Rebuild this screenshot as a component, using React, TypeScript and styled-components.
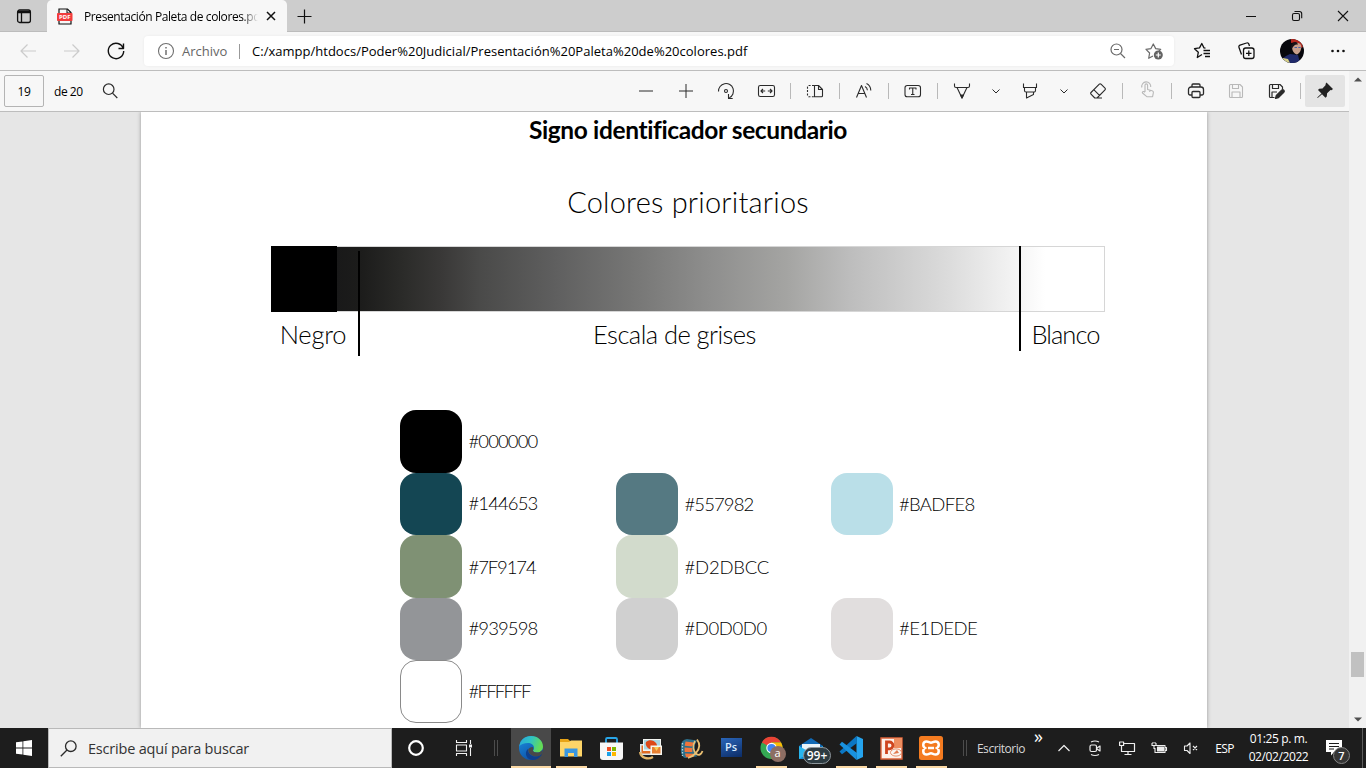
import React from 'react';
import styled, { createGlobalStyle } from 'styled-components';

const ui = `"Open Sans", "Noto Sans", sans-serif`;
const doc = `Lato, "Open Sans", sans-serif`;

const GlobalStyle = createGlobalStyle`
  * { box-sizing: border-box; }
  body { margin: 0; overflow: hidden; background: #e6e6e6; }
  svg { display: block; flex: none; overflow: visible; }
`;

const Screen = styled.div`
  width: 1366px;
  height: 768px;
  display: flex;
  flex-direction: column;
  font-family: ${ui};
  color: #000;
`;

const Text = styled.span<{ $size: number; $ls?: number; $color?: string }>`
  font-size: ${p => p.$size}px;
  letter-spacing: ${p => p.$ls ?? 0}px;
  color: ${p => p.$color ?? '#000'};
  white-space: nowrap;
`;

/* ---------- tab strip ---------- */
const TabStrip = styled.header`
  height: 32px;
  flex: none;
  display: flex;
  background: #cdcdcd;
  box-shadow: inset 0 -1px 0 #bcbcbc;
`;
const TabMenu = styled.div`
  width: 47px;
  display: flex;
  align-items: center;
  padding-left: 16px;
`;
const Tab = styled.div`
  width: 240px;
  height: 32px;
  background: #f7f7f7;
  border-radius: 5px 5px 0 0;
  display: flex;
  align-items: center;
  padding-left: 10px;
`;
const TabTitle = styled(Text)`
  width: 175px;
  margin: 0 7px 0 11px;
  overflow: hidden;
  mask-image: linear-gradient(90deg, #000 158px, transparent 174px);
`;
const NewTab = styled.div`
  flex: 1;
  display: flex;
  align-items: center;
  padding-left: 10px;
`;
const WindowButton = styled.div`
  width: 46px;
  display: flex;
  align-items: center;
  justify-content: center;
`;

/* ---------- address row ---------- */
const AddressRow = styled.nav`
  height: 39px;
  flex: none;
  display: flex;
  background: #f7f7f7;
  border-bottom: 1px solid #bdbdbd;
`;
const NavButton = styled.div<{ $w: number }>`
  width: ${p => p.$w}px;
  display: flex;
  align-items: center;
  justify-content: center;
`;
const AddressBar = styled.div`
  width: 1030px;
  height: 30px;
  margin: 4px 6px 0 0;
  padding-left: 12px;
  background: #fff;
  border-radius: 4px;
  box-shadow: 0 0 3px rgba(0, 0, 0, 0.06);
  display: flex;
  align-items: center;
`;
const SchemeLabel = styled(Text)`
  width: 57px;
  margin-left: 6px;
`;
const Rule = styled.span`
  width: 1px;
  height: 15px;
  margin: 0 12px 0 0;
  background: #999;
`;
const Url = styled(Text)`
  flex: 1;
`;

/* ---------- pdf toolbar ---------- */
const Body = styled.div`
  flex: 1;
  display: flex;
  min-height: 0;
`;
const PdfViewer = styled.div`
  width: 1349px;
  display: flex;
  flex-direction: column;
`;
const PdfToolbar = styled.div`
  height: 41px;
  flex: none;
  display: flex;
  align-items: center;
  background: #f7f7f7;
  border-bottom: 1px solid #bdbdbd;
  padding-left: 4px;
`;
const PageInput = styled.div`
  width: 40px;
  height: 32px;
  border: 1px solid #b4b4b4;
  border-radius: 2px;
  display: flex;
  align-items: center;
  justify-content: center;
`;
const PageTotal = styled(Text)`
  width: 47px;
  margin-left: 10px;
`;
const Tools = styled.div`
  display: flex;
  align-items: center;
  margin-left: auto;
  margin-right: 4px;
`;
const Tool = styled.div<{ $w?: number }>`
  width: ${p => p.$w ?? 42}px;
  height: 32px;
  display: flex;
  align-items: center;
  justify-content: center;
`;
const ToolRule = styled.span`
  width: 1px;
  height: 16px;
  margin: 0 3px;
  background: #b9b9b9;
`;
const PinButton = styled(Tool)`
  margin-left: 1px;
  background: #e4e4e4;
  border-radius: 2px;
`;

/* ---------- document ---------- */
const Canvas = styled.main`
  flex: 1;
  min-height: 0;
  overflow: hidden;
  background: #e6e6e6;
  padding-left: 141px;
`;
const Page = styled.article`
  width: 1066px;
  height: 616px;
  background: #fff;
  padding-left: 130px;
  font-family: ${doc};
  box-shadow: 0 0 4px rgba(0, 0, 0, 0.35);
`;
const Content = styled.div`
  width: 834px;
`;
const Heading = styled.h1`
  margin: 0;
  height: 34px;
  line-height: 35px;
  font-size: 24.5px;
  font-weight: 700;
  letter-spacing: -0.38px;
  text-align: center;
  white-space: nowrap;
`;
const SubHeading = styled.h2`
  margin: 37px 0 27px;
  height: 36px;
  line-height: 38px;
  font-size: 29px;
  font-weight: 300;
  letter-spacing: 0.2px;
  text-align: center;
  color: #000;
`;
const Scale = styled.div`
  position: relative;
  height: 66px;
  display: flex;
`;
const BlackBlock = styled.div`
  width: 66px;
  background: #000;
`;
const Ramp = styled.div`
  flex: 1;
  border: 1px solid #d6d6d6;
  border-left: 0;
  background: linear-gradient(
    90deg,
    #191919 0, #1c1c1b 24px, #2b2b29 66px, #393837 104px, #4a4a49 143px, #5f5f5f 218px,
    #767675 296px, #8e8e8d 372px, #a4a4a2 449px, #bdbdbd 513px, #dcdcdc 613px,
    #f5f5f5 682px, #fff 708px
  );
`;
const Divider = styled.span<{ $x: number; $y: number }>`
  position: absolute;
  left: ${p => p.$x}px;
  top: ${p => p.$y}px;
  width: 2px;
  height: 105px;
  background: #000;
`;
const ScaleLabels = styled.div`
  display: grid;
  grid-template-columns: 84px 639px 32px 79px;
  height: 44px;
  line-height: 45px;
  font-size: 25.5px;
  font-weight: 300;
  text-align: center;
  color: #000;
`;
const ScaleLabel = styled.span<{ $ls: number; $col: number }>`
  grid-column: ${p => p.$col};
  letter-spacing: ${p => p.$ls}px;
  white-space: nowrap;
`;
const Palette = styled.div`
  display: grid;
  grid-template-columns: 216px 214.5px 200px;
  grid-auto-rows: 62.6px;
  margin: 54px 0 0 129px;
`;
const PaletteItem = styled.div<{ $col: number; $row: number }>`
  grid-column: ${p => p.$col};
  grid-row: ${p => p.$row};
  display: flex;
  align-items: center;
`;
const Swatch = styled.div<{ $color: string; $outlined?: boolean }>`
  width: 62px;
  height: 62.6px;
  margin-right: 6.5px;
  border-radius: 16px;
  background: ${p => p.$color};
  border: ${p => (p.$outlined ? '1px solid #8a8a8a' : '0')};
`;
const Hex = styled.span<{ $ls: number; $lift: number }>`
  font-size: 18.5px;
  font-weight: 300;
  letter-spacing: ${p => p.$ls}px;
  margin-bottom: ${p => p.$lift * 2}px;
  color: #000;
`;

/* ---------- scrollbar ---------- */
const Scrollbar = styled.div`
  width: 17px;
  background: #f1f1f1;
  display: flex;
  flex-direction: column;
  align-items: center;
`;
const ScrollArrow = styled.div`
  height: 17px;
  display: flex;
  align-items: center;
`;
const ScrollThumb = styled.div`
  width: 13px;
  height: 25px;
  margin: 564px 0 34px;
  background: #c1c1c1;
`;

/* ---------- taskbar ---------- */
const Taskbar = styled.footer`
  height: 40px;
  flex: none;
  display: flex;
  background: #1d1d1d;
`;
const Cell = styled.div<{ $w: number }>`
  width: ${p => p.$w}px;
  height: 40px;
  flex: none;
  display: flex;
  align-items: center;
  justify-content: center;
`;
const SearchBox = styled.div`
  width: 344px;
  height: 40px;
  display: flex;
  align-items: center;
  padding-left: 11px;
  gap: 11px;
  background: #f1f1f1;
  border: 1px solid #b9b9b9;
`;
const Grip = styled.div<{ $ml: number; $mr: number }>`
  width: 4px;
  height: 16px;
  margin: 12px ${p => p.$mr}px 0 ${p => p.$ml}px;
  border: solid #4c4c4c;
  border-width: 0 1px;
`;
const AppTile = styled.div<{ $active?: boolean }>`
  width: 40px;
  height: 40px;
  padding-top: 2px;
  display: flex;
  flex-direction: column;
  align-items: center;
  background: ${p => (p.$active ? '#494949' : 'transparent')};
`;
const AppIcon = styled.div`
  position: relative;
  flex: 1;
  display: flex;
  align-items: center;
`;
const Underline = styled.span<{ $w: number }>`
  width: ${p => p.$w}px;
  height: 2px;
  background: #fbd9a5;
`;
const ChromeBadge = styled.span`
  position: absolute;
  left: 10px;
  top: 16px;
  width: 16px;
  height: 16px;
  border-radius: 50%;
  background: #8d6e63;
  color: #fff;
  font-size: 11px;
  line-height: 14px;
  text-align: center;
`;
const MailBadge = styled.span`
  position: absolute;
  left: 4px;
  top: 17px;
  width: 28px;
  height: 17px;
  border-radius: 9px;
  border: 1px solid #8d969c;
  background: #2d3b42;
  color: #fff;
  font-size: 12px;
  font-weight: 600;
  line-height: 15px;
  text-align: center;
`;
const PsTile = styled.span`
  width: 21px;
  height: 19px;
  margin-bottom: 3px;
  background: linear-gradient(160deg, #2a66ba, #0c2c66);
  color: #d9ecff;
  font-size: 11px;
  font-weight: 600;
  line-height: 18px;
  text-align: center;
`;
const More = styled(Text)`
  width: 14px;
  height: 20px;
  line-height: 17px;
  margin-left: 8px;
`;
const Clock = styled.div`
  width: 71px;
  display: flex;
  flex-direction: column;
  align-items: center;
  padding-top: 2px;
  line-height: 18px;
`;
const Notice = styled.div`
  position: relative;
  margin: 11px 0 0 12px;
  width: 36px;
`;
const NoticeBadge = styled.span`
  position: absolute;
  left: 7px;
  top: 8px;
  width: 17px;
  height: 17px;
  border-radius: 50%;
  border: 1px solid #858585;
  background: #353535;
  color: #fff;
  font-size: 11px;
  font-weight: 600;
  line-height: 15px;
  text-align: center;
`;
const ShowDesktop = styled.span`
  width: 1px;
  height: 40px;
  background: #5c5c5c;
`;

type IconProps = { w?: number; h?: number; stroke?: string; sw?: number; children: React.ReactNode };
const Icon = ({ w = 20, h = 20, stroke = '#2b2b2b', sw = 1.1, children }: IconProps) => (
  <svg width={w} height={h} viewBox={`0 0 ${w} ${h}`} fill="none" stroke={stroke} strokeWidth={sw} strokeLinejoin="round">
    {children}
  </svg>
);

const ChevronDown = () => <Icon sw={1}><path d="M6.500 8.500L10 12l3.500-3.500" /></Icon>;

const colors: { hex: string; col: number; row: number; ls: number; lift: number; outlined?: boolean }[] = [
  { hex: '#000000', col: 1, row: 1, ls: -0.9, lift: 0 },
  { hex: '#144653', col: 1, row: 2, ls: -0.9, lift: 0.5 },
  { hex: '#7F9174', col: 1, row: 3, ls: -1.1, lift: -1 },
  { hex: '#939598', col: 1, row: 4, ls: -0.9, lift: 1 },
  { hex: '#FFFFFF', col: 1, row: 5, ls: -1.75, lift: 1, outlined: true },
  { hex: '#557982', col: 2, row: 2, ls: -0.9, lift: 0 },
  { hex: '#D2DBCC', col: 2, row: 3, ls: -0.2, lift: -1 },
  { hex: '#D0D0D0', col: 2, row: 4, ls: -0.4, lift: 1 },
  { hex: '#BADFE8', col: 3, row: 2, ls: -0.7, lift: 0 },
  { hex: '#E1DEDE', col: 3, row: 4, ls: -0.5, lift: 1 },
];

export default function App() {
  return (
    <Screen>
      <GlobalStyle />
      <TabStrip>
        <TabMenu>
          <Icon w={16} h={16} stroke="#111" sw={1.3}>
            <rect x="1.600" y="2" width="12.800" height="12.500" rx="2" />
            <path d="M2 4h12" strokeWidth="2.500" /><path d="M5.500 4v10" />
          </Icon>
        </TabMenu>
        <Tab>
          <svg width="16" height="17" viewBox="0 0 16 17">
            <path d="M2 5V1h8.500L14 4.500V16H2v-3" fill="none" stroke="#111" strokeWidth="1.200" />
            <path d="M10 1v4h4" fill="none" stroke="#111" />
            <rect x="0" y="5" width="15.500" height="8" rx="0.800" fill="#f23c3c" />
            <text x="7.800" y="11.300" fontSize="6" fontWeight="700" fontFamily="Open Sans, sans-serif" textAnchor="middle" fill="#fff">PDF</text>
          </svg>
          <TabTitle $size={12} $ls={-0.4}>Presentación Paleta de colores.pdf</TabTitle>
          <Icon w={10} h={10} stroke="#111" sw={1.5}><path d="M1 1l8 8M9 1l-8 8" /></Icon>
        </Tab>
        <NewTab><Icon w={15} h={15} stroke="#111" sw={1.2}><path d="M0.500 7.500h14M7.500 0.500v14" /></Icon></NewTab>
        <WindowButton><Icon w={10} h={10} stroke="#111" sw={1}><path d="M0 5.500h10" /></Icon></WindowButton>
        <WindowButton>
          <Icon w={12} h={12} stroke="#111" sw={1.1}>
            <rect x="1.500" y="3.500" width="7" height="7" rx="1.500" />
            <path d="M3.500 1.500h5a2.200 2.200 0 0 1 2.200 2.200v4.500" />
          </Icon>
        </WindowButton>
        <WindowButton><Icon w={12} h={12} stroke="#111" sw={1.1}><path d="M1 1l10 10M11 1L1 11" /></Icon></WindowButton>
      </TabStrip>

      <AddressRow>
        <NavButton $w={56}><Icon w={18} h={16} stroke="#cbcbcb" sw={1.2}><path d="M17 8H1.500M8.500 1.500L2 8l6.500 6.500" /></Icon></NavButton>
        <NavButton $w={32}><Icon w={18} h={16} stroke="#cbcbcb" sw={1.2}><path d="M1 8h15.500M9.500 1.500L16 8l-6.500 6.500" /></Icon></NavButton>
        <NavButton $w={56}>
          <Icon stroke="#111" sw={1.4}><path d="M17.300 7.500A7.700 7.700 0 1 0 17.700 10M17.500 2.500v5h-5" /></Icon>
        </NavButton>
        <AddressBar>
          <Icon stroke="#707070"><circle cx="10" cy="10" r="7.500" /><path d="M10 9v5M10 6v1.600" strokeWidth="1.500" /></Icon>
          <SchemeLabel $size={13} $ls={0} $color="#666">Archivo</SchemeLabel>
          <Rule />
          <Url $size={13} $ls={0.015}>C:/xampp/htdocs/Poder%20Judicial/Presentación%20Paleta%20de%20colores.pdf</Url>
          <NavButton $w={32}>
            <Icon w={18} h={18} stroke="#6a6a6a" sw={1.2}><circle cx="7.500" cy="7.500" r="5.500" /><path d="M11.500 11.500l4.500 4.500M5 7.500h5" /></Icon>
          </NavButton>
          <NavButton $w={40}>
            <Icon stroke="#6a6a6a" sw={1.2}>
              <path d="M9 15l-4.300 2.300.9-5.300L2 8.300l5-.7L9.300 3l2.400 4.600 5 .7-1.800 1.900" />
              <circle cx="14.300" cy="14" r="4.500" fill="#636363" stroke="none" />
              <path d="M14.300 11.500v5M11.800 14h5" stroke="#fff" />
            </Icon>
          </NavButton>
        </AddressBar>
        <NavButton $w={44}>
          <Icon stroke="#111" sw={1.3}>
            <path d="M10 13.500L5.300 16.500l1-5.200L2.500 7.700l5-.8L9.800 2.500l2.200 4.400 1.500.2M11.500 9.500H18M11.500 12.500H18M13 15.500h5" />
          </Icon>
        </NavButton>
        <NavButton $w={44}>
          <Icon stroke="#111" sw={1.3}>
            <rect x="7.500" y="7" width="10.500" height="10.500" rx="2.200" />
            <path d="M12.800 9.500v5.500M10 12.300h5.500M5.500 13.500l-2.500-7c-.4-1 .1-2 1-2.300L10.500 2c1-.4 2 .1 2.300 1l.7 2" />
          </Icon>
        </NavButton>
        <NavButton $w={48}>
          <svg width="24" height="24" viewBox="0 0 24 24">
            <defs><clipPath id="avatar"><circle cx="12" cy="12" r="12" /></clipPath></defs>
            <g clipPath="url(#avatar)">
              <rect width="24" height="24" fill="#08080d" />
              <path d="M11 0h9l3 8-4 2-3-7-5 1z" fill="#b3261e" />
              <path d="M2 24l1-5 3-2 4-2 8 1 2 8z" fill="#202a6a" />
              <path d="M12 7c1-4 7-4 9-1 1 4-1 8-4 9.500-4-1-5-5-5-8.500z" fill="#c9a08c" />
              <path d="M11 9c0-5 3-6.500 6-5.500l1 2c-3-.5-4 1-6 4z" fill="#1a1216" />
              <path d="M3 19l5 1 2 4H3z" fill="#d6cf86" />
              <path d="M14.500 8.500h2.500M18.300 8.500h2.400" stroke="#4a63a6" strokeWidth="1.200" />
            </g>
          </svg>
        </NavButton>
        <NavButton $w={44}><Icon stroke="none"><g fill="#111"><circle cx="4.500" cy="10" r="1.300" /><circle cx="10" cy="10" r="1.300" /><circle cx="15.500" cy="10" r="1.300" /></g></Icon></NavButton>
      </AddressRow>

      <Body>
        <PdfViewer>
          <PdfToolbar>
            <PageInput><Text $size={12} $ls={-0.4}>19</Text></PageInput>
            <PageTotal $size={12} $ls={-0.45}>de 20</PageTotal>
            <Icon w={18} h={18} sw={1.2}><circle cx="7.700" cy="7.200" r="5.300" /><path d="M11.500 11.200l4.800 4.800" /></Icon>
            <Tools>
              <Tool $w={40}><Icon sw={1}><path d="M3 10h14" /></Icon></Tool>
              <Tool $w={40}><Icon sw={1}><path d="M3 10h14M10 3v14" /></Icon></Tool>
              <Tool $w={40}><Icon><path d="M2.500 10.500a7.500 7.500 0 1 1 10.800 6.300M12.500 13v4.500h4.200" /><circle cx="10" cy="10" r="1.500" /></Icon></Tool>
              <Tool $w={41}>
                <Icon w={21}><rect x="2.500" y="4.500" width="16" height="11" rx="1.800" /><path d="M5 10h4.200M11.800 10H16M7 8l-2 2 2 2M14 8l2 2-2 2" /></Icon>
              </Tool>
              <ToolRule />
              <Tool>
                <Icon>
                  <path d="M9.500 4.500h4L17.500 8.500v6.300a1 1 0 0 1-1 1h-7zM13.500 4.500v4h4" />
                  <path d="M9 4.500H4a1.500 1.500 0 0 0-1.500 1.500v8.300a1.500 1.500 0 0 0 1.500 1.500h5" strokeDasharray="2 1.400" />
                </Icon>
              </Tool>
              <ToolRule />
              <Tool><Icon><path d="M2.500 16.500L7.500 4.500l5 12M4.300 12.500h6.500M11 5.500c1.500.8 2.300 2 2.400 3.800M12.500 2.500c2.700 1.300 4.200 3.800 4.300 7" /></Icon></Tool>
              <ToolRule />
              <Tool><Icon><rect x="2" y="4.500" width="15.500" height="11.300" rx="2.300" /><path d="M6.500 8.500v-1.500h6.500v1.500M9.750 7v6.500M8 13.500h3.500" /></Icon></Tool>
              <ToolRule />
              <Tool><Icon><path d="M2.500 2.500v2.500a1.500 1.500 0 0 0 1.500 1.500h12a1.500 1.500 0 0 0 1.500-1.500v-2.500M5 6.500l5 10.500 5-10.500" /><path d="M8.600 14h2.800L10 17z" fill="#2b2b2b" /></Icon></Tool>
              <Tool $w={26}><ChevronDown /></Tool>
              <Tool><Icon><path d="M3.500 2.500v4h13v-4M4.500 6.500v3a1.500 1.500 0 0 0 1.500 1.500h8a1.500 1.500 0 0 0 1.500-1.500v-3M6.500 11v6l7-3.500V11" /></Icon></Tool>
              <Tool $w={26}><ChevronDown /></Tool>
              <Tool><Icon><path d="M3 11.500l8.300-8.300a1.200 1.200 0 0 1 1.700 0l4 4a1.200 1.200 0 0 1 0 1.700L9 17H6.800L3 13.200a1.200 1.200 0 0 1 0-1.700zM6 8.800l5.500 5.500M6.500 17H14" /></Icon></Tool>
              <ToolRule />
              <Tool>
                <Icon stroke="#b9b9b9">
                  <path d="M8 11V4.200a1.300 1.300 0 0 1 2.600 0V8.500l4.500 1.200c1 .3 1.500 1 1.300 2l-.8 4H9.800L5.500 12c-.6-.8.300-1.800 1.200-1.400L8 11.300M12.800 9v2M4.900 6.500A4.500 4.500 0 1 1 13.700 6" />
                </Icon>
              </Tool>
              <ToolRule />
              <Tool><Icon sw={1.300}><path d="M6 5.500v-1.500a1 1 0 0 1 1-1h6a1 1 0 0 1 1 1v1.500M6 14H4a1.500 1.500 0 0 1-1.500-1.500V8.500A2.500 2.500 0 0 1 5 6h10a2.500 2.500 0 0 1 2.500 2.500v4A1.500 1.500 0 0 1 16 14h-2" /><rect x="6" y="10.500" width="8" height="6" rx="1" /></Icon></Tool>
              <Tool $w={38}><Icon stroke="#b9b9b9"><path d="M4.500 3.500h9.500l2.500 2.500v9.500a1 1 0 0 1-1 1h-11a1 1 0 0 1-1-1v-11a1 1 0 0 1 1-1zM6.500 3.500v4h6v-4M6 16.500v-5.500h8v5.500" /></Icon></Tool>
              <Tool>
                <Icon sw={1.200}>
                  <path d="M8.500 16.500h-4a1 1 0 0 1-1-1v-11a1 1 0 0 1 1-1h9.500l2.500 2.500v2M6.500 3.500v4h6v-4M6 16.500v-5.500h5" />
                  <path d="M9.500 17.500l.8-3 5.300-5.300a1.500 1.500 0 0 1 2.200 2.200l-5.300 5.300z" fill="#2b2b2b" />
                </Icon>
              </Tool>
              <ToolRule />
              <PinButton $w={40}>
                <Icon stroke="none"><path d="M11.500 1.500l6.500 6.500-1.500 1.200-1-.2-3.400 3.200-.3 3.300-1.300 1.200-3.500-3.500-4.300 3.800-.5-.5L6.500 12.500 3 9l1.200-1.300 3.300-.3 3.200-3.400-.2-1z" fill="#222" /></Icon>
              </PinButton>
            </Tools>
          </PdfToolbar>
          <Canvas>
            <Page>
              <Content>
                <Heading>Signo identificador secundario</Heading>
                <SubHeading>Colores prioritarios</SubHeading>
                <Scale>
                  <BlackBlock />
                  <Ramp />
                  <Divider $x={87} $y={5} />
                  <Divider $x={748} $y={0} />
                </Scale>
                <ScaleLabels>
                  <ScaleLabel $col={1} $ls={-0.2}>Negro</ScaleLabel>
                  <ScaleLabel $col={2} $ls={-0.55}>Escala de grises</ScaleLabel>
                  <ScaleLabel $col={4} $ls={-0.95}>Blanco</ScaleLabel>
                </ScaleLabels>
                <Palette>
                  {colors.map(c => (
                    <PaletteItem key={c.hex} $col={c.col} $row={c.row}>
                      <Swatch $color={c.hex} $outlined={c.outlined} />
                      <Hex $ls={c.ls} $lift={c.lift}>{c.hex}</Hex>
                    </PaletteItem>
                  ))}
                </Palette>
              </Content>
            </Page>
          </Canvas>
        </PdfViewer>
        <Scrollbar>
          <ScrollArrow><svg width="8" height="5"><path d="M0 4.500L4 0.500l4 4z" fill="#505050" /></svg></ScrollArrow>
          <ScrollThumb />
          <ScrollArrow><svg width="8" height="5"><path d="M0 0.500L4 4.500l4-4z" fill="#505050" /></svg></ScrollArrow>
        </Scrollbar>
      </Body>

      <Taskbar>
        <Cell $w={48}>
          <svg width="16" height="16" viewBox="0 0 16 16" fill="#fff"><path d="M0 2.300l6.500-.9v6.200H0zM7.300 1.300L16 0v7.600H7.300zM0 8.400h6.500v6.200L0 13.700zM7.300 8.400H16V16l-8.700-1.300z" /></svg>
        </Cell>
        <SearchBox>
          <Icon w={17} h={17} sw={1.3}><circle cx="10.800" cy="6.200" r="5.300" /><path d="M7 10L0.800 16.200" /></Icon>
          <Text $size={14.5} $ls={-0.2} $color="#333">Escribe aquí para buscar</Text>
        </SearchBox>
        <Cell $w={48}><Icon stroke="#fff" sw={2.2}><circle cx="10" cy="10" r="6.800" /></Icon></Cell>
        <Cell $w={48}>
          <Icon w={16} h={16} stroke="#f2f2f2">
            <path d="M0.500 0v2.500h10V0M0.500 16v-2.500h10V16" /><rect x="0.500" y="5" width="10" height="6" />
            <path d="M14.500 0v4M14.500 8v8" /><rect x="13" y="4.500" width="3" height="3" fill="#f2f2f2" stroke="none" />
          </Icon>
        </Cell>
        <Grip $ml={6} $mr={13} />
        <AppTile $active>
          <AppIcon>
            <svg width="24" height="24" viewBox="0 0 24 24">
              <defs>
                <linearGradient id="edgeTop" x1="0" y1="0" x2="1" y2="0.300"><stop offset="0" stopColor="#2aa5dc" /><stop offset="0.500" stopColor="#2fc3c4" /><stop offset="1" stopColor="#64dc55" /></linearGradient>
                <linearGradient id="edgeLow" x1="0" y1="0" x2="0.600" y2="1"><stop offset="0" stopColor="#1d8fe0" /><stop offset="1" stopColor="#0c4fa5" /></linearGradient>
              </defs>
              <circle cx="12" cy="12" r="12" fill="url(#edgeLow)" />
              <path d="M0.300 10.500C1 4 6 0 12 0c7 0 12 5 12 10.500 0 4-3 6-6 6-2.500 0-4-1-4-1.800 0-.7 1-1 1-3C15 9 12 7 9 7c-4 0-7.500 1.500-8.700 3.500z" fill="url(#edgeTop)" />
              <path d="M9 13c-.5 4.500 4 8 8.500 7.500 2-.2 3.500-1 4.500-2 .6-.5 1 0 .7.500C20 23 15 25 11 23.500 6 21.500 6 15 9 13z" fill="#0f3f8c" />
              <path d="M14 14.500c0 1 1.500 2 4 2 2 0 4-1 5.300-2.600.4 2-1 5-1.300 4.600-1 1-2.500 2-5 2-4 0-8-3-7.800-7 .8-1.500 2.300-2.600 4.500-2.600 1 1.500.3 2.500.3 3.600z" fill="#494949" />
            </svg>
          </AppIcon>
          <Underline $w={40} />
        </AppTile>
        <AppTile>
          <AppIcon>
            <svg width="22" height="20" viewBox="0 0 22 20">
              <path d="M0 1h8l2 2h12v15H0z" fill="#e8a417" /><path d="M0 4h9l2-1.500h11V18.500H0z" fill="#fed568" />
              <path d="M4.500 10.500h13v8.500h-3.500v-4h-6v4H4.500z" fill="#3a97e0" />
            </svg>
          </AppIcon>
          <Underline $w={31} />
        </AppTile>
        <AppTile>
          <AppIcon>
            <svg width="23" height="24" viewBox="0 0 23 24">
              <path d="M6 6V2.300Q6 1 7.300 1h8.400Q17 1 17 2.300V6" fill="none" stroke="#29a6e8" strokeWidth="1.800" />
              <path d="M0 5.500h23V20q0 3-3 3H3q-3 0-3-3z" fill="#f7f7f7" />
              <path d="M7 10h4v4H7z" fill="#f04e23" /><path d="M12 10h4v4h-4z" fill="#7db900" /><path d="M7 15h4v4H7z" fill="#1ba1e8" /><path d="M12 15h4v4h-4z" fill="#feb800" />
            </svg>
          </AppIcon>
        </AppTile>
        <AppTile>
          <AppIcon>
            <svg width="24" height="22" viewBox="0 0 24 22">
              <path d="M1 6h12v11H1z" fill="#d9e6ea" /><path d="M2.500 7.500h9v8h-9z" fill="#e06b22" />
              <path d="M4 1h18v12H4z" fill="#f3f5f2" /><path d="M5 2h16v9.500H5z" fill="#a9d6e2" /><path d="M7 4c3-3 8-2 10 1s1 6-3 6.500S5.500 8 7 4z" fill="#dd4818" />
              <path d="M11.500 7.500H23V17H11.500z" fill="#f6f6f0" /><path d="M13 9h8.500v6.500H13z" fill="#e88132" /><path d="M15 9l2.500 4L20 9z" fill="#f6cf59" />
              <path d="M1 14c1 6 8 8 13 5" fill="none" stroke="#e4b668" strokeWidth="2.200" />
            </svg>
          </AppIcon>
        </AppTile>
        <AppTile>
          <AppIcon>
            <svg width="24" height="22" viewBox="0 0 24 22">
              <path d="M2 8Q2 2 8 1l10 1.500-2 4-.5 7 2.500 5-12 1.500Q1 18 2 8z" fill="#2d6f8b" />
              <path d="M6.500 3.500l8 1-1.200 4-7.600-.8zM5.500 9.500l7.800.6v4l-7.600-.2zM6 15.500l8 .2 1 3-8 .6z" fill="#f0743a" />
              <path d="M3.500 5v13" stroke="#b7d3d8" strokeWidth="1.300" strokeDasharray="1.500 1.500" />
              <path d="M16 3c-3 5-1.500 10 1.500 13 2.500 2 5 0 6-3M18 1.500c3 4 3 9-1 13.500-3 3-6 4.500-8 5" fill="none" stroke="#e9bf72" strokeWidth="1.800" />
            </svg>
          </AppIcon>
        </AppTile>
        <AppTile><AppIcon><PsTile>Ps</PsTile></AppIcon></AppTile>
        <AppTile>
          <AppIcon>
            <svg width="23" height="24" viewBox="0 0 24 24">
              <circle cx="12" cy="12" r="11.500" fill="#34a853" />
              <path d="M12 12L2 6.200A11.500 11.500 0 0 1 22 6.200H12z" fill="#ea4335" />
              <path d="M12 6.200h10A11.500 11.500 0 0 1 12 23.500L17 15z" fill="#fbbc05" />
              <circle cx="12" cy="12" r="5.500" fill="#fff" /><circle cx="12" cy="12" r="4.300" fill="#4285f4" />
            </svg>
            <ChromeBadge>a</ChromeBadge>
          </AppIcon>
          <Underline $w={31} />
        </AppTile>
        <AppTile>
          <AppIcon>
            <svg width="24" height="24" viewBox="0 0 24 24">
              <path d="M0 9l12-8 12 8v4H0z" fill="#1069b5" /><path d="M3 7h18v9H3z" fill="#e9f3f8" /><path d="M0 9l12 7 12-7v13H0z" fill="#28b5ee" /><path d="M0 22l12-7 12 7z" fill="#138bd2" />
            </svg>
            <MailBadge>99+</MailBadge>
          </AppIcon>
        </AppTile>
        <AppTile>
          <AppIcon>
            <svg width="24" height="24" viewBox="0 0 24 24">
              <path d="M17.500 0L24 3v18l-6.500 3z" fill="#25a4ee" />
              <path d="M17.500 0L0.500 15.500l2.500 2.800L18 7z" fill="#0b77c4" /><path d="M17.500 24L0.500 8.500 3 5.700 18 17z" fill="#1992df" />
            </svg>
          </AppIcon>
          <Underline $w={31} />
        </AppTile>
        <AppTile>
          <AppIcon>
            <svg width="23" height="23" viewBox="0 0 23 23">
              <path d="M1 1h21v21H1z" fill="#fdf1ea" stroke="#dd6238" strokeWidth="1.400" /><path d="M14 1h8v10h-8z" fill="#ee8d5f" />
              <path d="M6.500 17V5h3a3.400 3.400 0 0 1 0 6.800h-3" fill="none" stroke="#cf451f" strokeWidth="2.800" />
              <ellipse cx="16" cy="15.500" rx="5.500" ry="3.600" fill="#faf6f3" stroke="#e07a52" strokeWidth="0.800" /><path d="M13 17l4-4 2 3z" fill="#e27b50" />
            </svg>
          </AppIcon>
          <Underline $w={31} />
        </AppTile>
        <AppTile>
          <AppIcon>
            <svg width="24" height="24" viewBox="0 0 24 24">
              <rect width="24" height="24" rx="2.500" fill="#f47b20" />
              <path d="M7.500 5.500c2 0 3 1.200 4.500 1.200s2.500-1.200 4.500-1.200c4 0 4 5 1.500 6.500 2.500 1.500 2.500 6.500-1.500 6.500-2 0-3-1.200-4.500-1.200s-2.500 1.200-4.500 1.200c-4 0-4-5-1.500-6.500-2.500-1.500-2.500-6.500 1.500-6.500z" fill="none" stroke="#fff" strokeWidth="2.500" />
              <path d="M9 12h6" stroke="#fff" strokeWidth="2.500" />
            </svg>
          </AppIcon>
          <Underline $w={31} />
        </AppTile>
        <Grip $ml={12} $mr={9} />
        <Cell $w={50}><Text $size={12} $ls={-0.45} $color="#d8d8d8">Escritorio</Text></Cell>
        <More $size={18} $color="#fff">»</More>
        <Cell $w={31}><Icon w={14} h={14} stroke="#eee" sw={1.2}><path d="M1.500 10L7 4.500l5.500 5.500" /></Icon></Cell>
        <Cell $w={32}>
          <Icon w={16} h={16} stroke="#eee" sw={1.2}><rect x="3" y="5" width="6.500" height="6.500" rx="1.500" /><path d="M10 8l3-2v5l-3-2M4 2q4-2 8 0M4 14.500q4 2 8 0" /></Icon>
        </Cell>
        <Cell $w={32}>
          <Icon w={16} h={16} stroke="#eee" sw={1.2}><path d="M5 3.500h10.500v8H2.500V6M9 11.500v3M5.500 14.500h7" /><rect x="0.600" y="2" width="4" height="3.500" /></Icon>
        </Cell>
        <Cell $w={32}>
          <Icon w={16} h={16} stroke="#eee" sw={1.1}><path d="M5 5.500h9v7H4V8M14.500 7.500h1v3h-1M1 3v2.500h4V3M3 5.500V9M2 2v1.500M4 2v1.500" /><path d="M6.500 7h6v4h-6z" fill="#eee" /></Icon>
        </Cell>
        <Cell $w={31}>
          <Icon w={16} h={16} stroke="#eee" sw={1.1}><path d="M1.500 6h2.500l3-3v10.500l-3-3H1.500zM10 6l4 4M14 6l-4 4" /></Icon>
        </Cell>
        <Cell $w={37}><Text $size={12} $ls={-0.6} $color="#fff">ESP</Text></Cell>
        <Clock>
          <Text $size={12} $ls={-0.35} $color="#fff">01:25 p. m.</Text>
          <Text $size={12} $ls={-0.4} $color="#fff">02/02/2022</Text>
        </Clock>
        <Notice>
          <svg width="16" height="17" viewBox="0 0 16 17"><path d="M0 1h16v12H8l-3 3.500V13H0z" fill="#fff" /><path d="M3 4.500h10M3 7.500h10M3 10h5" stroke="#1d1d1d" /></svg>
          <NoticeBadge>7</NoticeBadge>
        </Notice>
        <ShowDesktop />
      </Taskbar>
    </Screen>
  );
}
